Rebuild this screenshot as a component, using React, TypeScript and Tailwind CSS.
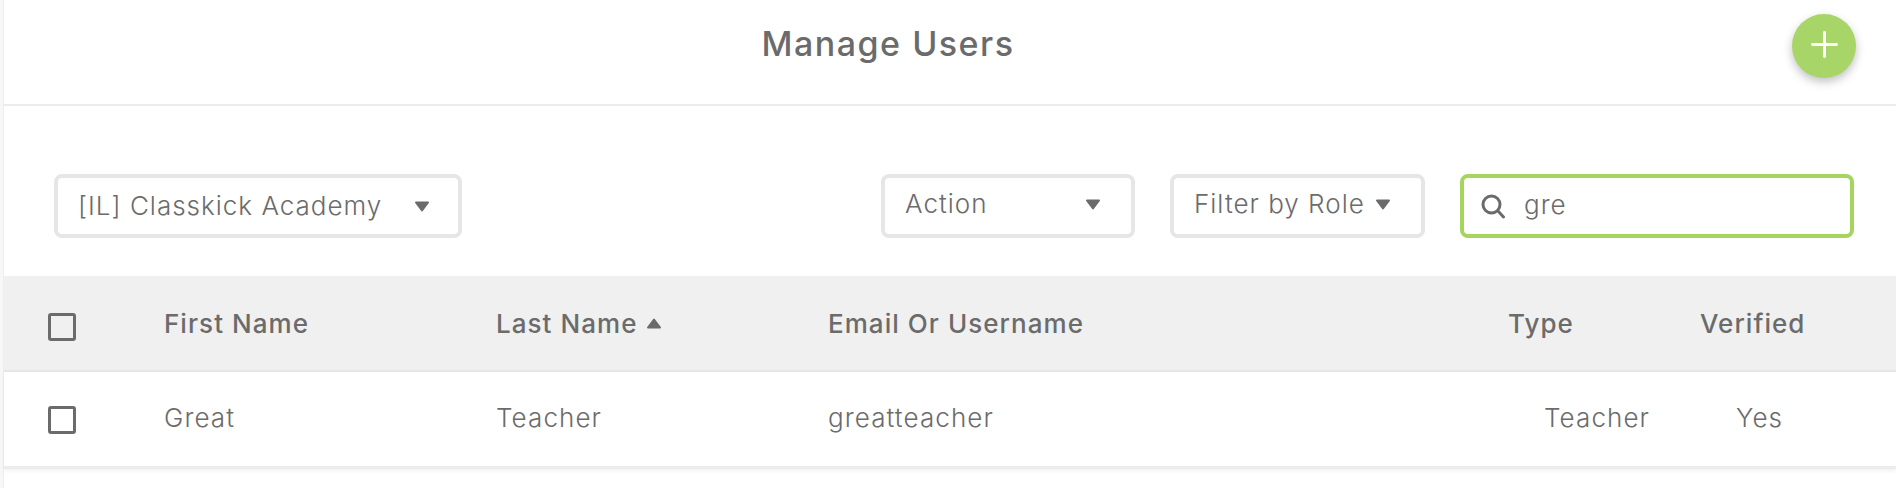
import { Plus } from "lucide-react";

const font = "font-['Inter',sans-serif]";

function Caret({ up = false }: { up?: boolean }) {
  return (
    <svg width="16" height="11" viewBox="0 0 16 11" className={up ? "rotate-180" : ""}>
      <path d="M2 1.5h12L8 9.5z" fill="#6b6b6b" stroke="#6b6b6b" strokeWidth="2" strokeLinejoin="round" />
    </svg>
  );
}

function Dropdown({ label, width, spacing }: { label: string; width: string; spacing: string }) {
  return (
    <div className={`${width} h-16 flex items-center justify-between border-4 border-[#e6e6e6] rounded-lg ${spacing}`}>
      <span className="text-[26px] font-light tracking-[1px] text-[#6b6b6b] leading-none">{label}</span>
      <Caret />
    </div>
  );
}

function Checkbox() {
  return <div className="w-7 h-7 border-[3px] border-[#6b6b6b] rounded-[3px]" />;
}

export default function App() {
  return (
    <div className={`${font} h-[488px] w-[1896px] bg-white flex overflow-hidden`}>
      <div className="w-1 bg-[#f7f7f7] border-r border-[#eeeeee]" />
      <div className="flex-1 flex flex-col">
        {/* Title bar */}
        <header className="relative h-[106px] flex items-center justify-center border-b-2 border-[#ececec]">
          <h1 className="text-[34px] font-medium tracking-[1.5px] text-[#6b6b6b] pb-[18px] pr-[124px]">Manage Users</h1>
          <button className="absolute right-[40px] top-[14px] w-16 h-16 rounded-full bg-[#a8d568] flex items-center justify-center text-white pb-[3px] shadow-[0_4px_10px_rgba(0,0,0,0.25)]">
            <Plus size={41} strokeWidth={1.75} />
          </button>
        </header>

        {/* Filters */}
        <div className="flex items-center pt-[68px] pb-[38px] pl-[50px] pr-[42px]">
          <Dropdown label="[IL] Classkick Academy" width="w-[408px]" spacing="pl-5 pr-[28px]" />
          <div className="ml-auto flex gap-[35px]">
            <Dropdown label="Action" width="w-[254px]" spacing="pl-5 pr-[30px] pb-1" />
            <Dropdown label="Filter by Role" width="w-[255px]" spacing="pl-5 pr-[30px] pb-1" />
            <div className="w-[394px] h-16 flex items-center gap-[18px] border-4 border-[#a5d45f] rounded-lg pl-[16px]">
              <svg width="26" height="26" viewBox="0 0 26 26" fill="none" stroke="#6b6b6b" strokeWidth="3" strokeLinecap="round">
                <circle cx="11.5" cy="11.5" r="8.5" />
                <path d="M18 18l5.5 6" />
              </svg>
              <span className="text-[26px] font-light tracking-[1px] text-[#6b6b6b] leading-none pb-[2px]">gre</span>
            </div>
          </div>
        </div>

        {/* Table */}
        <div className="grid grid-cols-[160px_332px_332px_680px_192px_1fr] h-[96px] items-center bg-[#f0f0f0] border-b-2 border-[#e6e6e6] text-[26px] font-medium tracking-[1.05px] text-[#6b6b6b]">
          <div className="pl-11 pt-2"><Checkbox /></div>
          <div>First Name</div>
          <div className="flex items-center gap-2">Last Name <Caret up /></div>
          <div>Email Or Username</div>
          <div>Type</div>
          <div>Verified</div>
        </div>
        <div className="grid grid-cols-[160px_332px_332px_680px_192px_1fr] h-[97px] items-center border-b-[3px] border-[#ececec] shadow-[0_2px_4px_rgba(0,0,0,0.06)] text-[26px] font-light tracking-[1.1px] text-[#6b6b6b]">
          <div className="pl-11 pt-[2px]"><Checkbox /></div>
          <div className="pb-1">Great</div>
          <div className="pb-1">Teacher</div>
          <div className="pb-1">greatteacher</div>
          <div className="pl-9 pb-1">Teacher</div>
          <div className="pl-9 pb-1">Yes</div>
        </div>
      </div>
    </div>
  );
}
